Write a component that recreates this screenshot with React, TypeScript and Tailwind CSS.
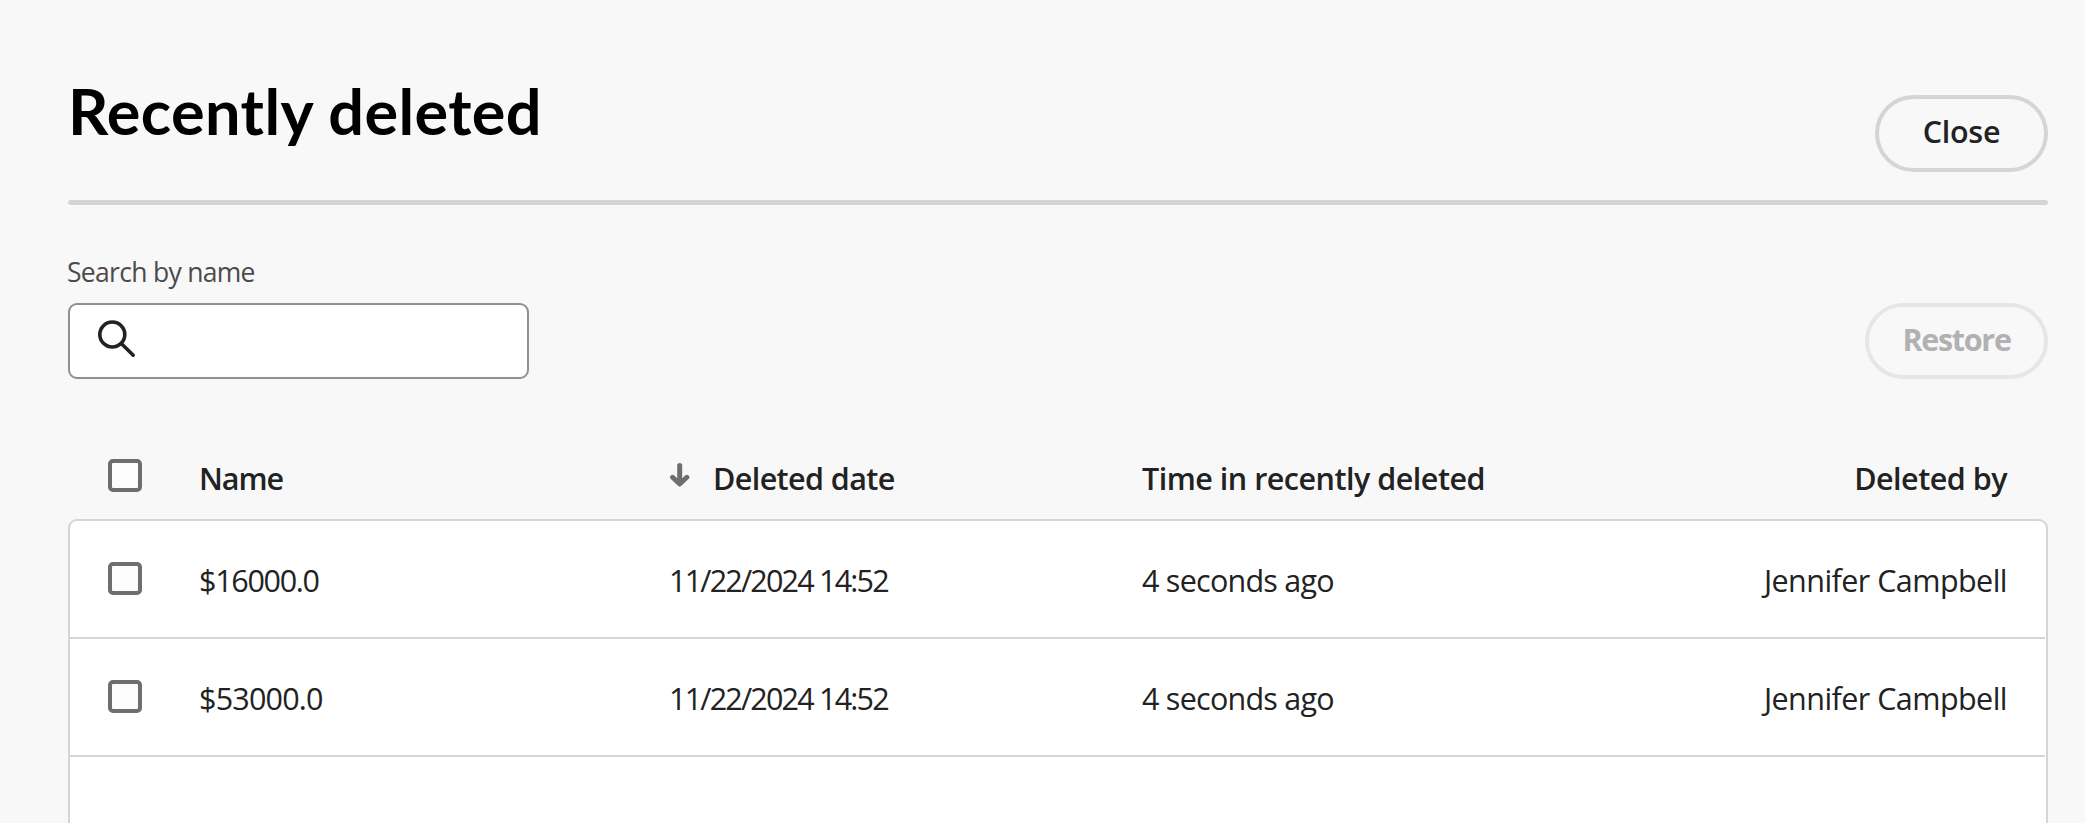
const COLUMNS = 'grid grid-cols-[92px_470px_472px_460px_1fr]';

const rows = [
  { name: '$16000.0', nameTracking: 'tracking-[-1.3px]', date: '11/22/2024 14:52', time: '4 seconds ago', by: 'Jennifer Campbell' },
  { name: '$53000.0', nameTracking: 'tracking-[-0.8px]', date: '11/22/2024 14:52', time: '4 seconds ago', by: 'Jennifer Campbell' },
];

function Checkbox() {
  return <span role="checkbox" aria-checked="false" className="block h-[33px] w-[34px] rounded-[5px] border-4 border-[#6e6e6e] bg-[#fcfcfc]" />;
}

function SearchIcon() {
  return (
    <svg width="40" height="40" viewBox="0 0 40 40" fill="none" stroke="#222222" strokeWidth="3.6" strokeLinecap="round">
      <circle cx="16.3" cy="16.5" r="12.5" />
      <path d="M25.3 25.5 37.2 37.2" />
    </svg>
  );
}

function SortDownIcon() {
  return (
    <svg width="20" height="24" viewBox="0 0 20 24" fill="none" stroke="#6e6e6e" strokeWidth="5" strokeLinecap="round" strokeLinejoin="round">
      <path d="M9.7 2.5V20" />
      <path d="M2.6 14.3 9.7 21 16.8 14.3" />
    </svg>
  );
}

export default function App() {
  return (
    <main className="flex h-[823px] w-full flex-col overflow-hidden bg-[#f8f8f8] pr-[37px] pl-[68px] font-['Open_Sans','Noto_Sans',sans-serif] text-[30.5px] leading-[38px] text-[#222222]">
      <header className="flex h-[200px] items-start justify-between">
        <h1 className="mt-[73px] font-['Lato',sans-serif] text-[63px] leading-[76px] font-bold tracking-[0.4px] text-black">Recently deleted</h1>
        <button className="mt-[95px] h-[77px] w-[173px] rounded-full border-4 border-[#d5d5d5] pb-[6px] font-semibold tracking-[-0.3px]">Close</button>
      </header>
      <hr className="h-[5px] w-full shrink-0 rounded-full border-0 bg-[#d5d5d5]" />
      <section className="flex h-[174px] shrink-0 items-end justify-between">
        <label className="flex flex-col">
          <span className="mb-[15px] -ml-px text-[26.5px] leading-[32px] tracking-[-0.7px] text-[#4b4b4b]">Search by name</span>
          <span className="flex h-[76px] w-[461px] rounded-[9px] border-2 border-[#909090] bg-white pt-[13px] pl-[26px]">
            <SearchIcon />
          </span>
        </label>
        <button disabled className="h-[76px] w-[183px] rounded-full border-4 border-[#e6e6e6] pb-[4px] font-bold tracking-[-1.3px] text-[#b1b1b1]">
          Restore
        </button>
      </section>
      <section className="mt-[80px] flex grow flex-col">
        <div className={`${COLUMNS} h-[60px] shrink-0 items-start pr-[41px] pl-10 font-semibold tracking-[-0.5px]`}>
          <Checkbox />
          <span className="-ml-px tracking-[-1.1px]">Name</span>
          <span className="flex">
            <span className="w-[43px] pt-1">
              <SortDownIcon />
            </span>
            <span className="tracking-[-0.6px]">Deleted date</span>
          </span>
          <span>Time in recently deleted</span>
          <span className="text-right">Deleted by</span>
        </div>
        <div className="grow rounded-t-[9px] border-2 border-b-0 border-[#d5d5d5] bg-white">
          {rows.map((row) => (
            <div key={row.name} className={`${COLUMNS} mr-px h-[118px] items-start border-b-2 border-[#d5d5d5] pt-10 pr-[38px] pl-[38px]`}>
              <span className="pt-px">
                <Checkbox />
              </span>
              <span className={`-ml-px ${row.nameTracking}`}>{row.name}</span>
              <span className="-ml-px tracking-[-1.8px]">{row.date}</span>
              <span className="tracking-[-0.75px]">{row.time}</span>
              <span className="text-right tracking-[-0.55px]">{row.by}</span>
            </div>
          ))}
        </div>
      </section>
    </main>
  );
}
